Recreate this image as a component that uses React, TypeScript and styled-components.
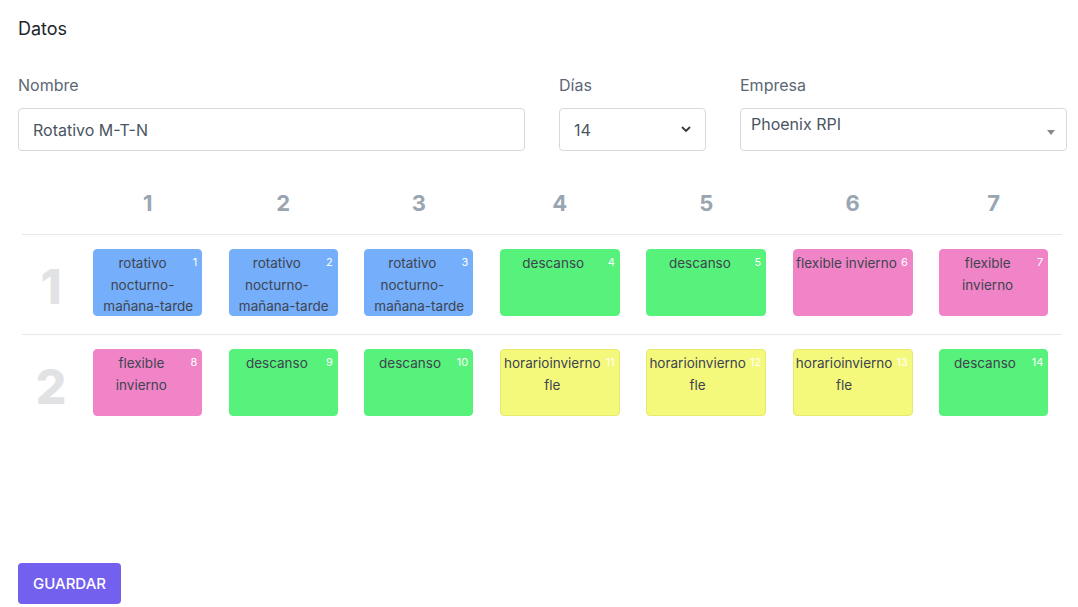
import React from 'react';
import styled, { createGlobalStyle } from 'styled-components';

const GlobalStyle = createGlobalStyle`
    body {
        margin: 0;
        background: #fff;
        font-family: Inter, "Open Sans", sans-serif;
        color: #4b5563;
    }
`;

type Tone = 'blue' | 'green' | 'pink' | 'yellow';

const tones: Record<Tone, { bg: string; border: string }> = {
    blue: { bg: '#75aefa', border: '#75aefa' },
    green: { bg: '#56f27b', border: '#56f27b' },
    pink: { bg: '#f084c7', border: '#f084c7' },
    yellow: { bg: '#f4f97b', border: '#e6ea6c' },
};

const Page = styled.main`
    padding: 17px 11px 0 18px;
    display: flex;
    flex-direction: column;
`;

const Title = styled.h4`
    margin: 0;
    font-size: 18px;
    font-weight: 400;
    line-height: 24px;
    color: #212529;
`;

const FormRow = styled.div`
    display: flex;
    gap: 34px;
    margin-top: 32px;
`;

const Field = styled.div<{ $w: number }>`
    width: ${(p) => p.$w}px;
    display: flex;
    flex-direction: column;
`;

const Label = styled.label`
    font-size: 16px;
    line-height: 24px;
    color: #5c6773;
    margin-bottom: 11px;
`;

const Box = styled.div`
    height: 43px;
    box-sizing: border-box;
    border: 1px solid #d5d9de;
    border-radius: 4px;
    display: flex;
    align-items: center;
    justify-content: space-between;
    padding: 0 14px;
    font-size: 16px;
    color: #4a5562;
`;

const Select2Box = styled(Box)`
    align-items: flex-start;
    padding: 5px 11px 0 10px;
`;

const Caret = styled.span`
    width: 0;
    height: 0;
    margin-top: 16px;
    border-left: 4px solid transparent;
    border-right: 4px solid transparent;
    border-top: 5px solid #888;
`;

const Grid = styled.div`
    margin: 31px 0 0 4px;
    width: 1040px;
    display: grid;
    grid-template-columns: 58px repeat(3, 135.5px) repeat(3, 146.5px) 135.5px;
`;

const HeadCell = styled.div`
    padding: 6px 0 16px;
    line-height: 30px;
    text-align: center;
    font-size: 22px;
    font-weight: 700;
    color: #99a6b2;
`;

const RowLabel = styled.div`
    border-top: 1px solid #e6e8ea;
    height: 100px;
    display: flex;
    align-items: center;
    justify-content: center;
    padding-top: 4px;
    box-sizing: border-box;
    font-size: 48px;
    font-weight: 800;
    color: #e1e2e4;
`;

const Slot = styled.div`
    border-top: 1px solid #e6e8ea;
    height: 100px;
    box-sizing: border-box;
    padding-top: 14px;
    display: flex;
    justify-content: center;
`;

const Shift = styled.div<{ $tone: Tone; $w: number }>`
    width: ${(p) => p.$w}px;
    height: 67px;
    box-sizing: border-box;
    background: ${(p) => tones[p.$tone].bg};
    border: 1px solid ${(p) => tones[p.$tone].border};
    border-radius: 4px;
    padding: 3px 0 0 1px;
    font-size: 13.5px;
    line-height: 21.5px;
    color: #3e4550;
    text-align: center;
    overflow: hidden;
`;

const Num = styled.span`
    float: right;
    height: 40px;
    padding: 0 4px 0 3px;
    font-size: 11px;
    line-height: 18px;
    color: #fff;
`;

const SaveButton = styled.button`
    margin-top: 129px;
    align-self: flex-start;
    width: 103px;
    height: 41px;
    border: none;
    border-radius: 4px;
    background: #7460ee;
    color: #fff;
    font-family: Inter, sans-serif;
    font-size: 15px;
    font-weight: 500;
`;

const cols = [1, 2, 3, 4, 5, 6, 7];
const widths = [109, 109, 109, 120, 120, 120, 109];

const weeks: { text: string; tone: Tone }[][] = [
    [
        { text: 'rotativo nocturno-mañana-tarde', tone: 'blue' },
        { text: 'rotativo nocturno-mañana-tarde', tone: 'blue' },
        { text: 'rotativo nocturno-mañana-tarde', tone: 'blue' },
        { text: 'descanso', tone: 'green' },
        { text: 'descanso', tone: 'green' },
        { text: 'flexible invierno', tone: 'pink' },
        { text: 'flexible invierno', tone: 'pink' },
    ],
    [
        { text: 'flexible invierno', tone: 'pink' },
        { text: 'descanso', tone: 'green' },
        { text: 'descanso', tone: 'green' },
        { text: 'horarioinvierno fle', tone: 'yellow' },
        { text: 'horarioinvierno fle', tone: 'yellow' },
        { text: 'horarioinvierno fle', tone: 'yellow' },
        { text: 'descanso', tone: 'green' },
    ],
];

const App = () => {
    return (
        <>
            <GlobalStyle />
            <Page>
                <Title>Datos</Title>
                <FormRow>
                    <Field $w={507}>
                        <Label>Nombre</Label>
                        <Box>Rotativo M-T-N</Box>
                    </Field>
                    <Field $w={147}>
                        <Label>Días</Label>
                        <Box>
                            <span>14</span>
                            <svg width="10" height="7" viewBox="0 0 10 7">
                                <path d="M1.5 1.5 L5 5 L8.5 1.5" fill="none" stroke="#343a40" strokeWidth="1.8" strokeLinecap="round" />
                            </svg>
                        </Box>
                    </Field>
                    <Field $w={327}>
                        <Label>Empresa</Label>
                        <Select2Box>
                            <span>Phoenix RPI</span>
                            <Caret />
                        </Select2Box>
                    </Field>
                </FormRow>

                <Grid>
                    <HeadCell />
                    {cols.map((c) => (
                        <HeadCell key={c}>{c}</HeadCell>
                    ))}
                    {weeks.map((week, wi) => (
                        <React.Fragment key={wi}>
                            <RowLabel>{wi + 1}</RowLabel>
                            {week.map((d, di) => (
                                <Slot key={di}>
                                    <Shift $tone={d.tone} $w={widths[di]}>
                                        <Num>{wi * 7 + di + 1}</Num>
                                        {d.text}
                                    </Shift>
                                </Slot>
                            ))}
                        </React.Fragment>
                    ))}
                </Grid>

                <SaveButton>GUARDAR</SaveButton>
            </Page>
        </>
    );
};

export default App;
